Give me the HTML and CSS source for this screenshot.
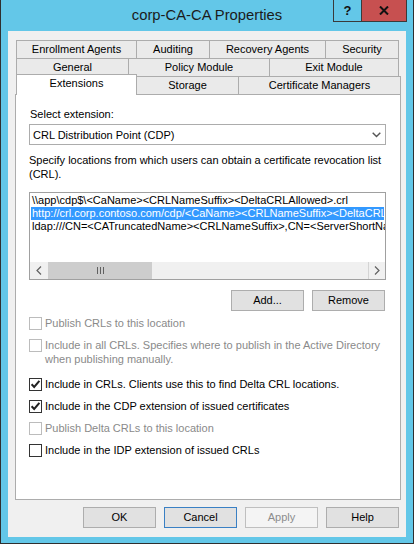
FILE: index.html
```html
<!DOCTYPE html>
<html>
<head>
<meta charset="utf-8">
<title>corp-CA-CA Properties</title>
<link rel="stylesheet" href="styles.css">
</head>
<body>
<div class="window">
  <div class="titlebar">
    <div class="title-spacer"></div>
    <div class="title">corp-CA-CA Properties</div>
    <div class="caption-buttons">
      <div class="cap-btn help-btn">?</div>
      <div class="cap-btn close-btn">
        <svg width="10" height="9" viewBox="0 0 10 9"><path d="M1 0.5 L9 8.5 M9 0.5 L1 8.5" stroke="#111" stroke-width="2" fill="none"/></svg>
      </div>
    </div>
  </div>
  <div class="client">
    <div class="tabs">
      <div class="tab-row">
        <div class="tab w-enroll">Enrollment Agents</div>
        <div class="tab w-audit">Auditing</div>
        <div class="tab w-recovery">Recovery Agents</div>
        <div class="tab w-security">Security</div>
      </div>
      <div class="tab-row">
        <div class="tab w-general">General</div>
        <div class="tab w-policy">Policy Module</div>
        <div class="tab w-exit">Exit Module</div>
      </div>
      <div class="tab-row">
        <div class="tab tab-selected w-ext">Extensions</div>
        <div class="tab w-storage">Storage</div>
        <div class="tab w-certmgr">Certificate Managers</div>
      </div>
    </div>
    <div class="panel">
      <div class="label">Select extension:</div>
      <div class="combo">
        <span class="combo-text">CRL Distribution Point (CDP)</span>
        <svg class="combo-arrow" width="9" height="6" viewBox="0 0 9 6"><path d="M0.7 0.7 L4.5 4.6 L8.3 0.7" stroke="#555" stroke-width="1.4" fill="none"/></svg>
      </div>
      <div class="desc">Specify locations from which users can obtain a certificate revocation list (CRL).</div>
      <div class="listbox">
        <div class="list-items">
          <div class="item">\\app\cdp$\&lt;CaName&gt;&lt;CRLNameSuffix&gt;&lt;DeltaCRLAllowed&gt;.crl</div>
          <div class="item selected">http://crl.corp.contoso.com/cdp/&lt;CaName&gt;&lt;CRLNameSuffix&gt;&lt;DeltaCRLAllowed&gt;.crl</div>
          <div class="item">ldap:///CN=&lt;CATruncatedName&gt;&lt;CRLNameSuffix&gt;,CN=&lt;ServerShortName&gt;,CN=CDP,CN=Public Key Services,CN=Services,&lt;ConfigurationContainer&gt;&lt;CDPObjectClass&gt;</div>
        </div>
        <div class="hscroll">
          <div class="sb-btn">
            <svg width="6" height="9" viewBox="0 0 6 9"><path d="M5 0.5 L1 4.5 L5 8.5" stroke="#606060" stroke-width="1.2" fill="none"/></svg>
          </div>
          <div class="sb-thumb">
            <svg width="7" height="7" viewBox="0 0 7 7"><path d="M0.5 0 V7 M3.5 0 V7 M6.5 0 V7" stroke="#606060" stroke-width="1" fill="none"/></svg>
          </div>
          <div class="sb-track"></div>
          <div class="sb-btn sb-right">
            <svg width="6" height="9" viewBox="0 0 6 9"><path d="M1 0.5 L5 4.5 L1 8.5" stroke="#606060" stroke-width="1.2" fill="none"/></svg>
          </div>
        </div>
      </div>
      <div class="list-buttons">
        <div class="btn">Add...</div>
        <div class="btn">Remove</div>
      </div>
      <div class="check-row first disabled">
        <span class="cb"></span>
        <span class="cb-label">Publish CRLs to this location</span>
      </div>
      <div class="check-row disabled">
        <span class="cb"></span>
        <span class="cb-label">Include in all CRLs. Specifies where to publish in the Active Directory when publishing manually.</span>
      </div>
      <div class="check-row gap-big">
        <span class="cb">
          <svg width="11" height="11" viewBox="0 0 11 11"><path d="M1.6 5.2 L4.2 8 L9.4 1.8" stroke="#222" stroke-width="2" fill="none"/></svg>
        </span>
        <span class="cb-label">Include in CRLs. Clients use this to find Delta CRL locations.</span>
      </div>
      <div class="check-row">
        <span class="cb">
          <svg width="11" height="11" viewBox="0 0 11 11"><path d="M1.6 5.2 L4.2 8 L9.4 1.8" stroke="#222" stroke-width="2" fill="none"/></svg>
        </span>
        <span class="cb-label">Include in the CDP extension of issued certificates</span>
      </div>
      <div class="check-row disabled">
        <span class="cb"></span>
        <span class="cb-label">Publish Delta CRLs to this location</span>
      </div>
      <div class="check-row">
        <span class="cb"></span>
        <span class="cb-label">Include in the IDP extension of issued CRLs</span>
      </div>
    </div>
    <div class="dialog-buttons">
      <div class="btn">OK</div>
      <div class="btn btn-default">Cancel</div>
      <div class="btn btn-disabled">Apply</div>
      <div class="btn">Help</div>
    </div>
  </div>
</div>
</body>
</html>
```

FILE: styles.css
```css
* { box-sizing: border-box; }
html, body { margin: 0; padding: 0; }
body {
  width: 414px;
  height: 544px;
  overflow: hidden;
  font-family: "Liberation Sans", Arial, sans-serif;
  font-size: 11px;
  color: #000;
  background: #fff;
}
.window {
  width: 414px;
  height: 544px;
  background: #63c7e8;
  border-left: 1px solid #2f2f2f;
  border-right: 1px solid #2f2f2f;
  border-bottom: 1px solid #2f2f2f;
  padding: 0 7px 6px 7px;
  display: flex;
  flex-direction: column;
}
.titlebar {
  height: 31px;
  display: grid;
  grid-template-columns: 1fr auto 1fr;
  align-items: start;
}
.title {
  font-size: 14.8px;
  line-height: 31px;
  color: #1b1b1b;
  white-space: nowrap;
}
.caption-buttons {
  justify-self: end;
  display: flex;
  margin-right: -1px;
}
.cap-btn {
  height: 22px;
  border-bottom: 1px solid #3a3a3a;
  border-left: 1px solid #3a3a3a;
  display: flex;
  align-items: center;
  justify-content: center;
}
.help-btn {
  width: 28px;
  font-weight: bold;
  font-size: 13px;
  color: #111;
}
.close-btn {
  width: 46px;
  background: #c75050;
  border-right: 1px solid #3a3a3a;
}
.client {
  height: 506px;
  background: #f0f0f0;
  padding-top: 9px;
  display: flex;
  flex-direction: column;
}
.tabs {
  margin-left: 8px;
}
.tab-row {
  display: flex;
  align-items: flex-start;
}
.tab-row + .tab-row { margin-top: -1px; }
.tab {
  height: 19px;
  border: 1px solid #acacac;
  background: #eaeaea;
  text-align: center;
  line-height: 17px;
  white-space: nowrap;
  margin-left: -1px;
}
.tab:first-child { margin-left: 0; }
.tab-selected {
  position: relative;
  z-index: 2;
  margin-left: -2px;
  margin-top: -2px;
  height: 21px;
  border-bottom: none;
  background: #fff;
}
.w-enroll { width: 121px; }
.w-audit { width: 74px; }
.w-recovery { width: 117px; }
.w-security { width: 74px; }
.w-general { width: 113px; }
.w-policy { width: 142px; }
.w-exit { width: 130px; }
.w-ext { width: 121px; }
.w-storage { width: 103px; }
.w-certmgr { width: 163px; }
.panel {
  margin-top: -1px;
  margin-left: 7px;
  width: 386px;
  height: 406px;
  border: 1px solid #acacac;
  background: #fff;
  padding: 12px 14px 0 13px;
}
.label {
  line-height: 15px;
  padding-left: 1px;
}
.combo {
  margin-top: 2px;
  height: 21px;
  border: 1px solid #acacac;
  background: #fff;
  display: flex;
  align-items: center;
  justify-content: space-between;
  padding: 0 4px 0 3px;
}
.combo-arrow { margin-top: 1px; }
.desc {
  margin-top: 8px;
  line-height: 14px;
}
.listbox {
  margin-top: 11px;
  height: 88px;
  border: 1px solid #a0a0a0;
  background: #fff;
  display: flex;
  flex-direction: column;
}
.list-items {
  flex: 1;
  padding: 1px 1px 0 1px;
  overflow: hidden;
}
.item {
  height: 13px;
  line-height: 13px;
  white-space: nowrap;
  padding-left: 1px;
}
.item.selected {
  background: #3399ff;
  color: #fff;
}
.hscroll {
  height: 17px;
  display: flex;
  background: #f0f0f0;
}
.sb-btn {
  width: 17px;
  display: flex;
  align-items: center;
  justify-content: center;
}
.sb-right {
  border-left: 1px solid #d4d4d4;
}
.sb-thumb {
  margin-left: 1px;
  width: 104px;
  background: #cdcdcd;
  display: flex;
  align-items: center;
  justify-content: center;
}
.sb-track { flex: 1; }
.list-buttons {
  margin-top: 10px;
  display: flex;
  justify-content: flex-end;
  gap: 8px;
  padding-right: 1px;
}
.btn {
  width: 73px;
  height: 21px;
  border: 1px solid #adadad;
  background: #e1e1e1;
  text-align: center;
  line-height: 19px;
}
.btn-default { border-color: #3a80c4; }
.btn-disabled {
  border-color: #bfbfbf;
  background: #f4f4f4;
  color: #8c8c8c;
}
.check-row {
  display: flex;
  align-items: flex-start;
  gap: 3px;
  line-height: 14px;
  margin-top: 8px;
}
.check-row.first { margin-top: 5px; }
.check-row.gap-big { margin-top: 11px; }
.cb {
  flex-shrink: 0;
  width: 13px;
  height: 13px;
  margin-top: 1px;
  border: 1px solid #333;
  background: #fff;
  display: flex;
  align-items: center;
  justify-content: center;
}
.check-row.disabled .cb { border-color: #bcbcbc; }
.check-row.disabled .cb-label { color: #8a8a8a; }
.dialog-buttons {
  margin-top: 7px;
  display: flex;
  justify-content: flex-end;
  gap: 8px;
  padding-right: 7px;
}
```
